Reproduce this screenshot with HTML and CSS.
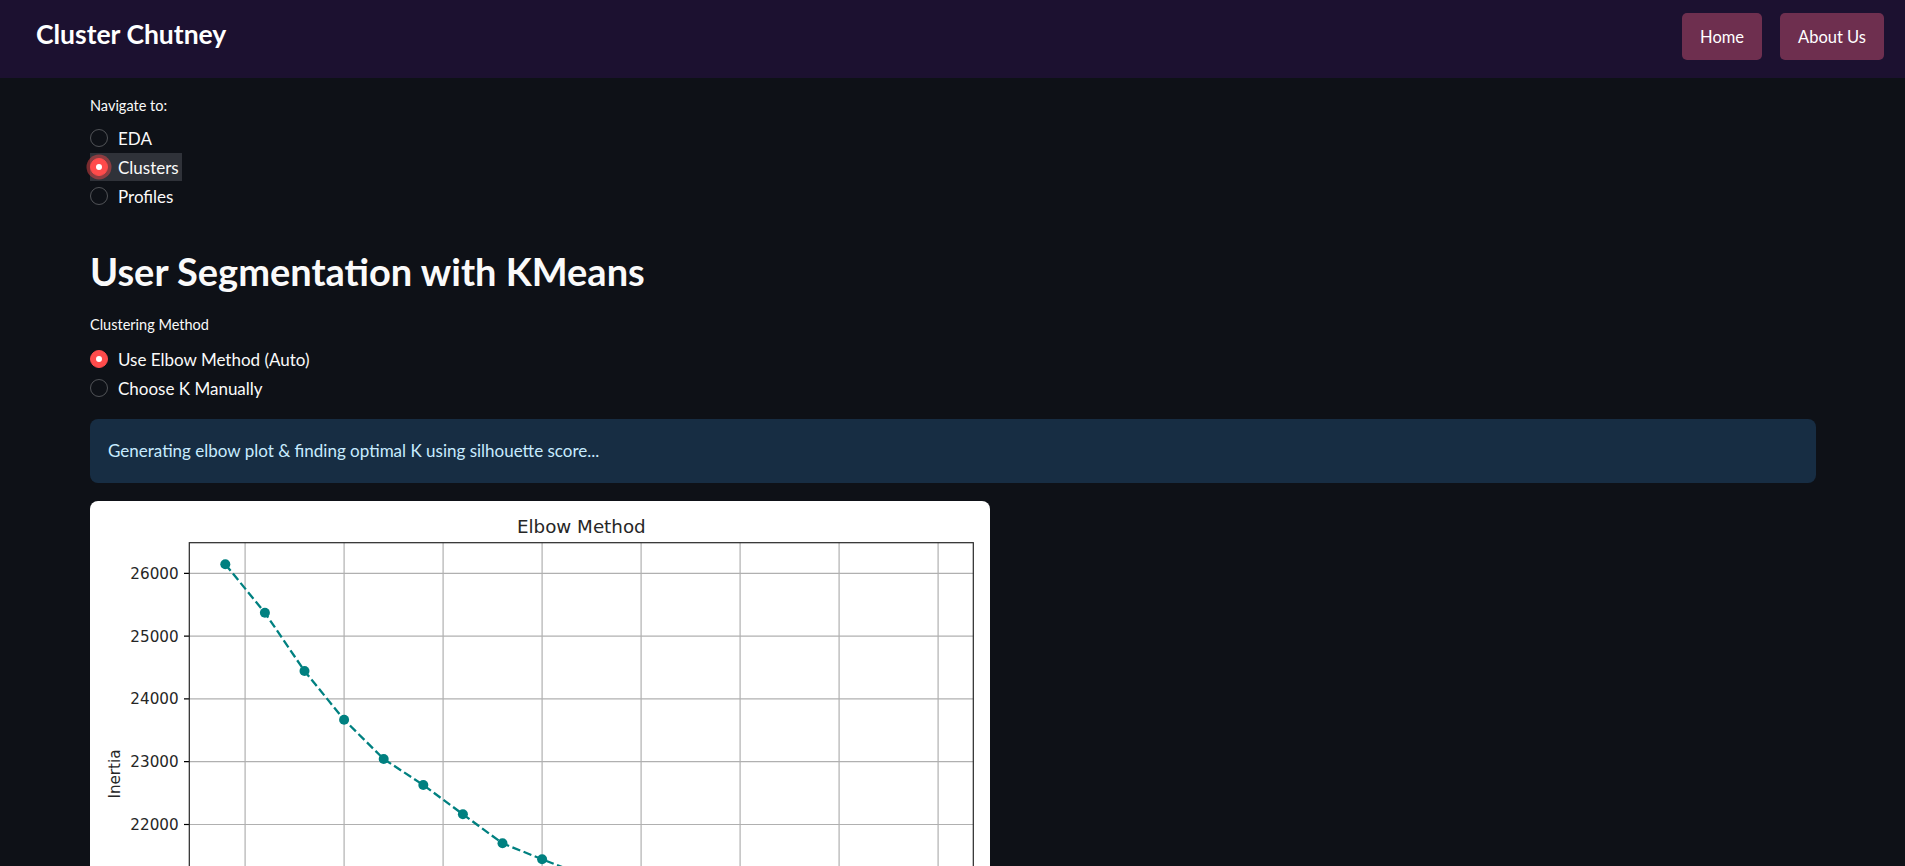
FILE: index.html
```html
<!DOCTYPE html>
<html lang="en">
<head>
<meta charset="utf-8">
<title>Cluster Chutney</title>
<link rel="stylesheet" href="styles.css">
</head>
<body>
<header class="topbar">
  <div class="brand">Cluster Chutney</div>
  <nav class="topnav">
    <a class="navbtn" href="#">Home</a>
    <a class="navbtn" href="#">About Us</a>
  </nav>
</header>
<main class="main">
  <div class="widget-label nav-label">Navigate to:</div>
  <div class="radio-group">
    <label class="radio-row"><span class="radio"></span><span class="radio-text">EDA</span></label>
    <label class="radio-row focused"><span class="radio checked halo"></span><span class="radio-text">Clusters</span></label>
    <label class="radio-row"><span class="radio"></span><span class="radio-text">Profiles</span></label>
  </div>

  <h1 class="page-title">User Segmentation with KMeans</h1>

  <div class="widget-label method-label">Clustering Method</div>
  <div class="radio-group">
    <label class="radio-row"><span class="radio checked"></span><span class="radio-text">Use Elbow Method (Auto)</span></label>
    <label class="radio-row"><span class="radio"></span><span class="radio-text">Choose K Manually</span></label>
  </div>

  <div class="info-box">Generating elbow plot &amp; finding optimal K using silhouette score...</div>

  <div class="plot-card">
    <svg class="plot" width="900" height="580" viewBox="0 0 900 580" xmlns="http://www.w3.org/2000/svg">
      <text class="plot-title" x="491.3" y="32" text-anchor="middle">Elbow Method</text>
      <g class="grid">
        <line x1="99.3" x2="883.3" y1="72.3" y2="72.3"/>
        <line x1="99.3" x2="883.3" y1="135.1" y2="135.1"/>
        <line x1="99.3" x2="883.3" y1="197.9" y2="197.9"/>
        <line x1="99.3" x2="883.3" y1="260.7" y2="260.7"/>
        <line x1="99.3" x2="883.3" y1="323.5" y2="323.5"/>
        <line x1="99.3" x2="883.3" y1="386.3" y2="386.3"/>
        <line x1="99.3" x2="883.3" y1="449.1" y2="449.1"/>
        <line x1="155.1" x2="155.1" y1="41.7" y2="516.9"/>
        <line x1="254.1" x2="254.1" y1="41.7" y2="516.9"/>
        <line x1="353.1" x2="353.1" y1="41.7" y2="516.9"/>
        <line x1="452.1" x2="452.1" y1="41.7" y2="516.9"/>
        <line x1="551.1" x2="551.1" y1="41.7" y2="516.9"/>
        <line x1="650.1" x2="650.1" y1="41.7" y2="516.9"/>
        <line x1="749.1" x2="749.1" y1="41.7" y2="516.9"/>
        <line x1="848.1" x2="848.1" y1="41.7" y2="516.9"/>
      </g>
      <g class="ticks">
        <line x1="94" x2="99.3" y1="72.3" y2="72.3"/>
        <line x1="94" x2="99.3" y1="135.1" y2="135.1"/>
        <line x1="94" x2="99.3" y1="197.9" y2="197.9"/>
        <line x1="94" x2="99.3" y1="260.7" y2="260.7"/>
        <line x1="94" x2="99.3" y1="323.5" y2="323.5"/>
        <line x1="94" x2="99.3" y1="386.3" y2="386.3"/>
        <line x1="94" x2="99.3" y1="449.1" y2="449.1"/>
        <line x1="155.1" x2="155.1" y1="516.9" y2="522.2"/>
        <line x1="254.1" x2="254.1" y1="516.9" y2="522.2"/>
        <line x1="353.1" x2="353.1" y1="516.9" y2="522.2"/>
        <line x1="452.1" x2="452.1" y1="516.9" y2="522.2"/>
        <line x1="551.1" x2="551.1" y1="516.9" y2="522.2"/>
        <line x1="650.1" x2="650.1" y1="516.9" y2="522.2"/>
        <line x1="749.1" x2="749.1" y1="516.9" y2="522.2"/>
        <line x1="848.1" x2="848.1" y1="516.9" y2="522.2"/>
      </g>
      <g class="tick-labels" text-anchor="end">
        <text x="88.7" y="77.8">26000</text>
        <text x="88.7" y="140.6">25000</text>
        <text x="88.7" y="203.4">24000</text>
        <text x="88.7" y="266.2">23000</text>
        <text x="88.7" y="329">22000</text>
        <text x="88.7" y="391.8">21000</text>
        <text x="88.7" y="454.6">20000</text>
      </g>
      <g class="tick-labels" text-anchor="middle">
        <text x="155.1" y="541">2.5</text>
        <text x="254.1" y="541">5.0</text>
        <text x="353.1" y="541">7.5</text>
        <text x="452.1" y="541">10.0</text>
        <text x="551.1" y="541">12.5</text>
        <text x="650.1" y="541">15.0</text>
        <text x="749.1" y="541">17.5</text>
        <text x="848.1" y="541">20.0</text>
      </g>
      <text class="axis-label" transform="translate(29.5 273) rotate(-90)" text-anchor="middle">Inertia</text>
      <text class="axis-label" x="491.3" y="566" text-anchor="middle">Number of Clusters (K)</text>
      <polyline class="series" points="135.3,63.3 174.9,111.7 214.5,170 254.1,218.7 293.7,258 333.3,284 372.9,313.3 412.5,342.3 452.1,358.3 491.7,373.7 531.3,389.4 570.9,403.9 610.5,417.7 650.1,430.9 689.7,443.4 729.3,455.4 768.9,466.7 808.5,478 848.1,495.3"/>
      <g class="markers">
        <circle cx="135.3" cy="63.3" r="5"/>
        <circle cx="174.9" cy="111.7" r="5"/>
        <circle cx="214.5" cy="170" r="5"/>
        <circle cx="254.1" cy="218.7" r="5"/>
        <circle cx="293.7" cy="258" r="5"/>
        <circle cx="333.3" cy="284" r="5"/>
        <circle cx="372.9" cy="313.3" r="5"/>
        <circle cx="412.5" cy="342.3" r="5"/>
        <circle cx="452.1" cy="358.3" r="5"/>
        <circle cx="491.7" cy="373.7" r="5"/>
        <circle cx="531.3" cy="389.4" r="5"/>
        <circle cx="570.9" cy="403.9" r="5"/>
        <circle cx="610.5" cy="417.7" r="5"/>
        <circle cx="650.1" cy="430.9" r="5"/>
        <circle cx="689.7" cy="443.4" r="5"/>
        <circle cx="729.3" cy="455.4" r="5"/>
        <circle cx="768.9" cy="466.7" r="5"/>
        <circle cx="808.5" cy="478" r="5"/>
        <circle cx="848.1" cy="495.3" r="5"/>
      </g>
      <rect class="spine" x="99.3" y="41.7" width="784" height="475.2"/>
    </svg>
  </div>
</main>
</body>
</html>
```
FILE: styles.css
```css
* { box-sizing: border-box; }

html, body {
  margin: 0;
  padding: 0;
  background: #0e1117;
  color: #fafafa;
  font-family: Lato, "Noto Sans", sans-serif;
}

.topbar {
  height: 78px;
  background: #1c1130;
  display: flex;
  align-items: center;
  justify-content: space-between;
  padding: 0 21px 0 36px;
}

.brand {
  font-size: 26.5px;
  line-height: 32px;
  font-weight: 700;
  color: #ffffff;
  margin-bottom: 10px;
}

.topnav {
  display: flex;
  gap: 18px;
  margin-bottom: 5px;
}

.navbtn {
  display: flex;
  align-items: center;
  height: 47px;
  padding: 0 18px;
  background: #6e2f4f;
  color: #ffffff;
  text-decoration: none;
  font-size: 16.5px;
  border-radius: 5px;
}

.main {
  padding: 18px 89px 40px 90px;
}

.widget-label {
  font-size: 14.5px;
  line-height: 20px;
  color: #fafafa;
}

.nav-label {
  margin-bottom: 8px;
}

.radio-group {
  display: flex;
  flex-direction: column;
  align-items: flex-start;
  gap: 1px;
}

.radio-row {
  display: flex;
  align-items: center;
  height: 28px;
  padding-right: 3px;
  gap: 10px;
  font-size: 17px;
  color: #fafafa;
}

.radio-row.focused {
  background: #2f3239;
}

.radio {
  width: 18px;
  height: 18px;
  border-radius: 50%;
  border: 1px solid rgba(250, 250, 250, 0.28);
  display: flex;
  align-items: center;
  justify-content: center;
  flex: none;
}

.radio.checked {
  background: #ff4b4b;
  border-color: #ff4b4b;
}

.radio.checked::after {
  content: "";
  width: 6px;
  height: 6px;
  border-radius: 50%;
  background: #ffffff;
}

.radio.halo {
  box-shadow: 0 0 0 3.5px rgba(255, 75, 75, 0.45);
}

.page-title {
  margin: 37px 0 0 0;
  font-size: 38px;
  line-height: 48px;
  font-weight: 700;
  color: #fafafa;
}

.method-label {
  margin-top: 20px;
  margin-bottom: 10px;
}

.info-box {
  margin-top: 17px;
  background: #172d43;
  color: #c7ebff;
  border-radius: 8px;
  padding: 20px 18px;
  font-size: 17px;
  line-height: 24px;
}

.plot-card {
  margin-top: 18px;
  width: 900px;
  background: #ffffff;
  border-radius: 8px;
  overflow: hidden;
}

.plot {
  display: block;
  font-family: "DejaVu Sans", sans-serif;
}

.plot-title {
  font-size: 18.3px;
  fill: #262626;
}

.grid line {
  stroke: #b0b0b0;
  stroke-width: 1.2;
}

.ticks line {
  stroke: #000000;
  stroke-width: 1.2;
}

.tick-labels text {
  font-size: 15.2px;
  fill: #262626;
}

.axis-label {
  font-size: 15.2px;
  fill: #262626;
}

.series {
  fill: none;
  stroke: #008080;
  stroke-width: 2.3;
  stroke-dasharray: 8.4 3.6;
}

.markers circle {
  fill: #008080;
}

.spine {
  fill: none;
  stroke: #262626;
  stroke-width: 1.2;
}
```
